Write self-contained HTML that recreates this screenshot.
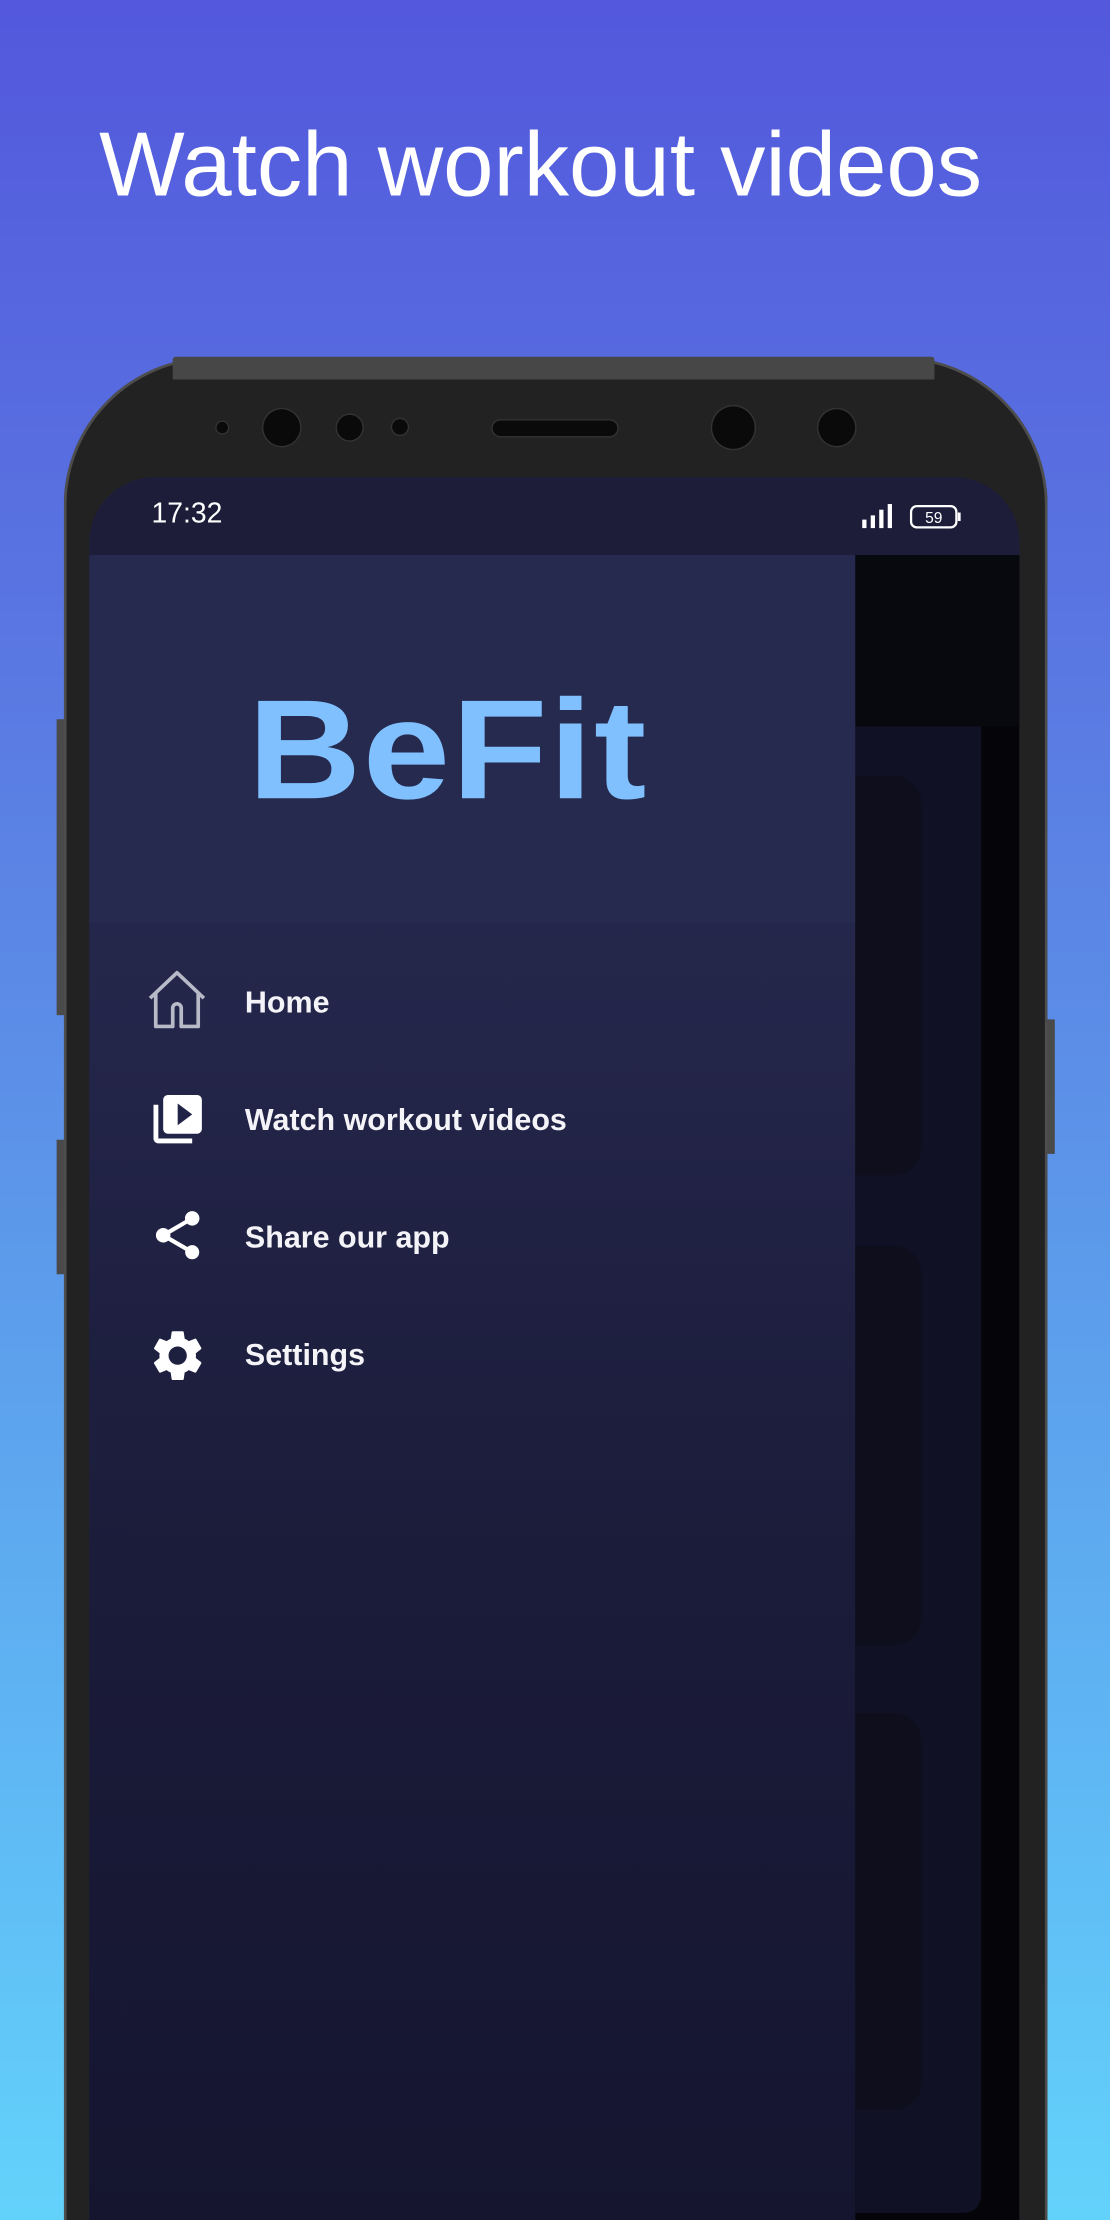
<!DOCTYPE html>
<html><head><meta charset="utf-8"><style>
html,body{margin:0;padding:0;width:1110px;height:2220px;overflow:hidden;}
#bg{position:absolute;left:0;top:0;width:1110px;height:2220px;background:linear-gradient(180deg,#5358dc 0%,#5a78e2 30%,#5c98ea 55%,#5fb8f4 80%,#63d2fb 100%);}
#s{position:absolute;left:0;top:0;width:784px;height:1568px;overflow:hidden;transform:scale(1.41582);transform-origin:0 0;font-family:"Liberation Sans",sans-serif;}
.a{position:absolute;}
.title{left:70px;top:79px;white-space:nowrap;color:#fff;font-size:64px;}
.phone{left:45px;top:252px;width:691px;height:1316px;border-radius:105px 105px 0 0;background:#222;border:2px solid #4d4d4d;border-bottom:none;}
.rim{left:122px;top:252px;width:538px;height:16px;background:#474747;border-radius:2px 2px 0 0;}
.btn{background:#4a4a4a;}
.dot{border-radius:50%;background:#0a0a0a;box-shadow:0 0 0 1px #333;}
.screen{left:63px;top:337px;width:657px;height:1231px;border-radius:46px 46px 0 0;overflow:hidden;background:#1d1d3a;}
.menu{position:absolute;left:110px;color:#f4f4f8;font-weight:bold;font-size:21.5px;}
.ic{position:absolute;left:40px;}
</style></head><body>
<div id="bg"></div>
<div id="s">
<div class="a title">Watch workout videos</div>
<div class="a btn" style="left:40px;top:508px;width:6px;height:209px;"></div>
<div class="a btn" style="left:40px;top:805px;width:6px;height:95px;"></div>
<div class="a btn" style="left:739px;top:720px;width:6px;height:95px;"></div>
<div class="a phone"></div>
<div class="a rim"></div>
<div class="a dot" style="left:153px;top:298px;width:8px;height:8px;"></div>
<div class="a dot" style="left:186px;top:289px;width:26px;height:26px;"></div>
<div class="a dot" style="left:238px;top:293px;width:18px;height:18px;"></div>
<div class="a dot" style="left:277px;top:296px;width:11px;height:11px;"></div>
<div class="a dot" style="left:348px;top:297px;width:88px;height:11px;border-radius:6px;"></div>
<div class="a dot" style="left:503px;top:287px;width:30px;height:30px;"></div>
<div class="a dot" style="left:578px;top:289px;width:26px;height:26px;"></div>
<div class="a screen">
  <div class="a" style="left:44px;top:15px;color:#fff;font-size:20px;">17:32</div>
  <svg class="a" style="left:545px;top:17px" width="80" height="22" viewBox="0 0 80 22">
    <rect x="1" y="13" width="3" height="6" fill="#fff"/><rect x="7" y="10" width="3" height="9" fill="#fff"/><rect x="13" y="6" width="3" height="13" fill="#fff"/><rect x="19" y="2" width="3" height="17" fill="#fff"/>
    <rect x="35.5" y="3.5" width="32" height="15" rx="4" fill="none" stroke="#fff" stroke-width="1.6"/>
    <rect x="68.5" y="8" width="2" height="6" fill="#fff"/>
    <text x="51.5" y="15.5" text-anchor="middle" fill="#fff" font-size="11" font-family="Liberation Sans">59</text>
  </svg>
  <div class="a" style="left:541px;top:55px;width:116px;height:1176px;background:#050509;"></div>
  <div class="a" style="left:541px;top:55px;width:116px;height:121px;background:#08080f;"></div>
  <div class="a" style="left:541px;top:176px;width:89px;height:1050px;background:#111125;border-radius:0 0 12px 0;"></div>
  <div class="a" style="left:520px;top:211px;width:68px;height:282px;background:#0e0e1c;border-radius:20px;"></div>
  <div class="a" style="left:520px;top:543px;width:68px;height:282px;background:#0e0e1c;border-radius:20px;"></div>
  <div class="a" style="left:520px;top:873px;width:68px;height:280px;background:#0e0e1c;border-radius:20px;"></div>
  <div class="a" style="left:0;top:55px;width:541px;height:1176px;background:linear-gradient(180deg,#262a50 0%,#232549 30%,#1b1c3a 60%,#151530 100%);">
    <div class="a" style="left:0;top:0;width:541px;height:260px;background:#262a4e;"></div>
    <div class="a" style="left:112px;top:77px;color:#80c0ff;font-weight:bold;font-size:111px;letter-spacing:1px;line-height:1;transform:scaleY(0.9);transform-origin:0 100%;">BeFit</div>
    <svg class="ic" style="top:292px" width="44" height="44" viewBox="0 0 44 44"><path d="M3 21 L22 3 L41 21 M7 18 V41 H19 V28 a3 3 0 0 1 6 0 V41 H37 V18" fill="none" stroke="#b8bac8" stroke-width="2.6" stroke-linejoin="round"/></svg>
    <div class="menu" style="top:304px;">Home</div>
    <svg class="ic" style="top:378px;left:42px" width="41" height="41" viewBox="0 0 24 24"><path fill="#fff" d="M4 6H2v14c0 1.1.9 2 2 2h14v-2H4V6zm16-4H8c-1.1 0-2 .9-2 2v12c0 1.1.9 2 2 2h12c1.1 0 2-.9 2-2V4c0-1.1-.9-2-2-2zm-8 12.5v-9l6 4.5-6 4.5z"/></svg>
    <div class="menu" style="top:387px;">Watch workout videos</div>
    <svg class="ic" style="top:460px;left:42px" width="41" height="41" viewBox="0 0 24 24"><path fill="#fff" d="M18 16.08c-.76 0-1.44.3-1.96.77L8.91 12.7c.05-.23.09-.46.09-.7s-.04-.47-.09-.7l7.05-4.11c.54.5 1.25.81 2.04.81 1.66 0 3-1.34 3-3s-1.34-3-3-3-3 1.34-3 3c0 .24.04.47.09.7L8.04 9.81C7.5 9.31 6.79 9 6 9c-1.66 0-3 1.34-3 3s1.34 3 3 3c.79 0 1.5-.31 2.04-.81l7.12 4.16c-.05.21-.08.43-.08.65 0 1.61 1.31 2.92 2.92 2.92s2.92-1.31 2.92-2.92-1.31-2.92-2.92-2.92z"/></svg>
    <div class="menu" style="top:470px;">Share our app</div>
    <svg class="ic" style="top:544px;left:41px" width="43" height="43" viewBox="0 0 24 24"><path fill="#fff" d="M19.14 12.94c.04-.3.06-.61.06-.94 0-.32-.02-.64-.07-.94l2.03-1.58c.18-.14.23-.41.12-.61l-1.92-3.32c-.12-.22-.37-.29-.59-.22l-2.39.96c-.5-.38-1.03-.7-1.62-.94l-.36-2.54c-.04-.24-.24-.41-.48-.41h-3.84c-.24 0-.43.17-.47.41l-.36 2.54c-.59.24-1.13.57-1.62.94l-2.39-.96c-.22-.08-.47 0-.59.22L2.74 8.87c-.12.21-.08.47.12.61l2.03 1.58c-.05.3-.09.63-.09.94s.02.64.07.94l-2.03 1.58c-.18.14-.23.41-.12.61l1.92 3.32c.12.22.37.29.59.22l2.39-.96c.5.38 1.03.7 1.62.94l.36 2.54c.05.24.24.41.48.41h3.84c.24 0 .44-.17.47-.41l.36-2.54c.59-.24 1.13-.56 1.62-.94l2.39.96c.22.08.47 0 .59-.22l1.92-3.32c.12-.22.07-.47-.12-.61l-2.01-1.58zM12 15.6c-1.98 0-3.6-1.62-3.6-3.6s1.62-3.6 3.6-3.6 3.6 1.62 3.6 3.6-1.62 3.6-3.6 3.6z"/></svg>
    <div class="menu" style="top:553px;">Settings</div>
  </div>
</div>
</div>
</body></html>
